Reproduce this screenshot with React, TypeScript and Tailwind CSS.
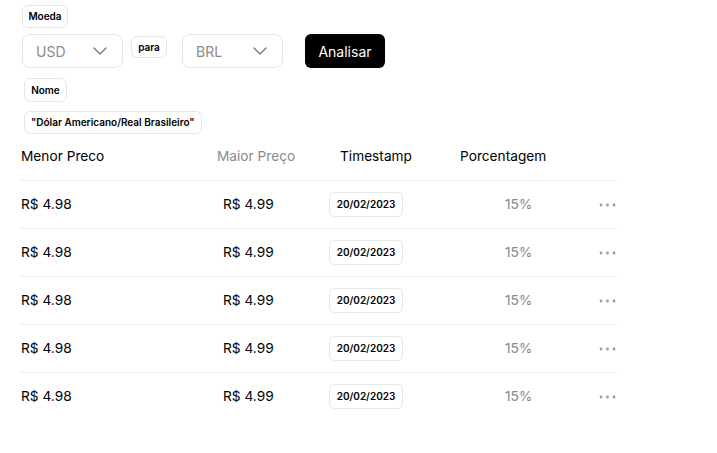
import { ChevronDown } from 'lucide-react';

const rows = [1, 2, 3, 4, 5];

function Badge({ children, className = '' }: { children: React.ReactNode; className?: string }) {
    return (
        <div className={`inline-flex items-center justify-center border border-[#e6e6e6] rounded-md text-[10px] font-semibold text-black ${className}`}>
            {children}
        </div>
    );
}

function Select({ value }: { value: string }) {
    return (
        <div className="w-[101px] h-[34px] flex items-center justify-between pl-[13px] pr-[14px] border border-[#e6e6e6] rounded-lg">
            <span className="text-[14px] text-[#8c8c8c]">{value}</span>
            <ChevronDown size={24} strokeWidth={1.5} className="text-[#808080] -mr-[4px]" />
        </div>
    );
}

function Dots() {
    return (
        <svg width="17" height="4" viewBox="0 0 17 4" className="text-[#9a9a9a]">
            <circle cx="2" cy="2" r="1.4" fill="currentColor" />
            <circle cx="8.5" cy="2" r="1.4" fill="currentColor" />
            <circle cx="15" cy="2" r="1.4" fill="currentColor" />
        </svg>
    );
}

export default function App() {
    return (
        <div className="w-[717px] h-[453px] bg-white text-black font-['Inter',sans-serif]">
            {/* Filters */}
            <div className="pl-[22px] pt-[5px] flex flex-col items-start">
                <Badge className="h-[23px] w-[46px]">Moeda</Badge>
                <div className="flex items-center mt-[6px]">
                    <Select value="USD" />
                    <Badge className="h-[22px] w-[36px] ml-[8px] -mt-[8px]">para</Badge>
                    <div className="ml-[15px]">
                        <Select value="BRL" />
                    </div>
                    <button className="ml-[22px] w-[80px] h-[34px] bg-black text-white text-[14px] rounded-md">
                        Analisar
                    </button>
                </div>
                <Badge className="h-[24px] w-[43px] ml-[2px] mt-[10px]">Nome</Badge>
                <Badge className="h-[23px] px-[6px] ml-[2px] mt-[9px]">"Dólar Americano/Real Brasileiro"</Badge>
            </div>

            {/* Table */}
            <div className="ml-[20px] -mt-[2px] w-[598px] text-[13.7px]">
                <div className="h-[48px] flex items-center">
                    <div className="w-[197px] pl-[1px]">Menor Preco</div>
                    <div className="w-[111px] text-[#8a8a8a]">Maior Preço</div>
                    <div className="w-[120px] pl-[12px]">Timestamp</div>
                    <div className="w-[130px] pl-[12px]">Porcentagem</div>
                    <div className="flex-1"></div>
                </div>
                {rows.map((r) => (
                    <div key={r} className="h-[48px] flex items-center border-t border-[#eeeeee]">
                        <div className="w-[197px] pl-[1px]">R$ 4.98</div>
                        <div className="w-[111px] pl-[6px]">R$ 4.99</div>
                        <div className="w-[120px] pl-[1px]">
                            <Badge className="h-[25px] w-[74px]">20/02/2023</Badge>
                        </div>
                        <div className="w-[130px] pl-[57px] text-[#8a8a8a]">15%</div>
                        <div className="flex-1 flex justify-end pr-[2px]">
                            <Dots />
                        </div>
                    </div>
                ))}
            </div>
        </div>
    );
}
